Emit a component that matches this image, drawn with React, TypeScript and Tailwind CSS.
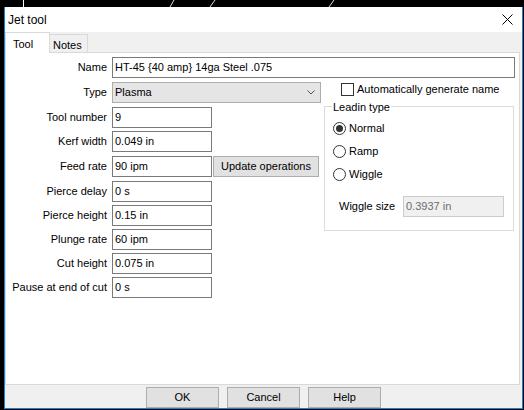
import React from 'react';

const font = "font-['Liberation_Sans',Arial,sans-serif]";

interface FieldProps {
  label: string;
  value: string;
  gap: string;
  children?: React.ReactNode;
}

const Field: React.FC<FieldProps> = ({ label, value, gap, children }) => (
  <div className={`flex items-center h-[21px] ${gap}`}>
    <span className="w-[101px] shrink-0 text-right whitespace-nowrap">{label}</span>
    <div className="ml-[5px] w-[100px] h-[21px] border border-[#7a7a7a] bg-white pl-[2px] flex items-center">
      {value}
    </div>
    {children}
  </div>
);

const Radio: React.FC<{ label: string; checked?: boolean }> = ({ label, checked }) => (
  <div className="flex items-center h-[13px] gap-[3px]">
    <div className="w-[13px] h-[13px] rounded-full border border-[#333] bg-white flex items-center justify-center">
      {checked && <div className="w-[7px] h-[7px] rounded-full bg-[#333]" />}
    </div>
    <span>{label}</span>
  </div>
);

const Button: React.FC<{ label: string; width: string }> = ({ label, width }) => (
  <div className={`${width} h-[21px] bg-[#e1e1e1] border border-[#adadad] flex items-center justify-center`}>
    {label}
  </div>
);

const rows = [
  { label: 'Tool number', value: '9', gap: 'mt-[4px]' },
  { label: 'Kerf width', value: '0.049 in', gap: 'mt-[3px]' },
  { label: 'Feed rate', value: '90 ipm', gap: 'mt-[4px]', button: true },
  { label: 'Pierce delay', value: '0 s', gap: 'mt-[4px]' },
  { label: 'Pierce height', value: '0.15 in', gap: 'mt-[3px]' },
  { label: 'Plunge rate', value: '60 ipm', gap: 'mt-[3px]' },
  { label: 'Cut height', value: '0.075 in', gap: 'mt-[3px]' },
  { label: 'Pause at end of cut', value: '0 s', gap: 'mt-[3px]' },
];

export default function App() {
  return (
    <div className={`w-[524px] h-[410px] bg-black flex flex-col text-[11px] text-black ${font}`}>
      {/* desktop behind the dialog */}
      <div className="h-[7px] shrink-0">
        <svg width="524" height="7" viewBox="0 0 524 7">
          <line x1="23.5" y1="0" x2="23.5" y2="7" stroke="#fff" strokeWidth="1" />
          <line x1="170" y1="7" x2="174" y2="0" stroke="#ddd" strokeWidth="1" />
          <line x1="210" y1="7" x2="215" y2="0" stroke="#ddd" strokeWidth="1" />
          <line x1="329" y1="7" x2="334" y2="0" stroke="#ddd" strokeWidth="1" />
        </svg>
      </div>

      <div className="ml-[4px] w-[519px] h-[402px] border-l border-r border-b border-[#1883d7] flex flex-col">
        {/* title bar */}
        <div className="h-[25px] bg-white flex items-center justify-between pl-[3px] pr-[9px]">
          <span className="text-[12px] pt-[1px]">Jet tool</span>
          <svg width="11" height="11" viewBox="0 0 11 11">
            <path d="M0.5 0.5 L10.5 10.5 M10.5 0.5 L0.5 10.5" stroke="#000" strokeWidth="1" fill="none" />
          </svg>
        </div>

        <div className="flex-1 bg-[#f0f0f0] flex flex-col">
          {/* tabs */}
          <div className="h-[20px] flex items-start shrink-0">
            <div className="relative z-10 w-[45px] h-[21px] bg-white border-t border-l border-r border-[#d9d9d9] pl-[7px] pt-[3px]">
              Tool
            </div>
            <div className="mt-[2px] w-[38px] h-[18px] bg-[#f0f0f0] border-t border-r border-[#d9d9d9] pl-[3px] pt-[2px]">
              Notes
            </div>
          </div>

          {/* panel */}
          <div className="h-[333px] mr-[2px] bg-white border border-[#d9d9d9] pt-[4px] shrink-0">
            <div className="flex items-center h-[21px]">
              <span className="w-[101px] shrink-0 text-right">Name</span>
              <div className="ml-[5px] w-[403px] h-[21px] border border-[#7a7a7a] bg-white pl-[2px] flex items-center">
                HT-45 {'{'}40 amp{'}'} 14ga Steel .075
              </div>
            </div>

            <div className="flex mt-[4px]">
              <div className="w-[315px] shrink-0 flex flex-col">
                <div className="flex items-center h-[21px]">
                  <span className="w-[101px] shrink-0 text-right">Type</span>
                  <div className="ml-[5px] w-[209px] h-[21px] border border-[#adadad] bg-[#e5e5e5] pl-[2px] pr-[5px] flex items-center justify-between">
                    <span>Plasma</span>
                    <svg width="8" height="5" viewBox="0 0 8 5">
                      <path d="M0.5 0.5 L4 4 L7.5 0.5" stroke="#555" strokeWidth="1" fill="none" />
                    </svg>
                  </div>
                </div>

                {rows.map((r) => (
                  <Field key={r.label} label={r.label} value={r.value} gap={r.gap}>
                    {r.button && (
                      <div className="ml-[1px] w-[106px] h-[21px] bg-[#e1e1e1] border border-[#adadad] flex items-center justify-center">
                        Update operations
                      </div>
                    )}
                  </Field>
                ))}
              </div>

              <div className="ml-[3px] flex flex-col">
                <div className="flex items-center ml-[17px] mt-[1px] h-[13px] gap-[3px]">
                  <div className="w-[13px] h-[13px] border border-[#333] bg-white" />
                  <span>Automatically generate name</span>
                </div>

                <div className="relative mt-[10px] w-[190px] h-[125px] border border-[#dcdcdc]">
                  <span className="absolute left-[7px] top-[-7px] bg-white px-[1px] leading-[14px]">Leadin type</span>
                  <div className="flex flex-col pl-[8px] pt-[15px] gap-[10px]">
                    <Radio label="Normal" checked />
                    <Radio label="Ramp" />
                    <Radio label="Wiggle" />
                  </div>
                  <div className="flex items-center mt-[15px] ml-[14px] h-[21px]">
                    <span className="w-[64px] shrink-0">Wiggle size</span>
                    <div className="w-[101px] h-[21px] border border-[#cccccc] bg-[#f0f0f0] text-[#6d6d6d] pl-[2px] flex items-center">
                      0.3937 in
                    </div>
                  </div>
                </div>
              </div>
            </div>
          </div>

          {/* footer */}
          <div className="flex justify-center gap-[8px] pt-[2px]">
            <Button label="OK" width="w-[73px]" />
            <Button label="Cancel" width="w-[73px]" />
            <Button label="Help" width="w-[73px]" />
          </div>
        </div>
      </div>
    </div>
  );
}
